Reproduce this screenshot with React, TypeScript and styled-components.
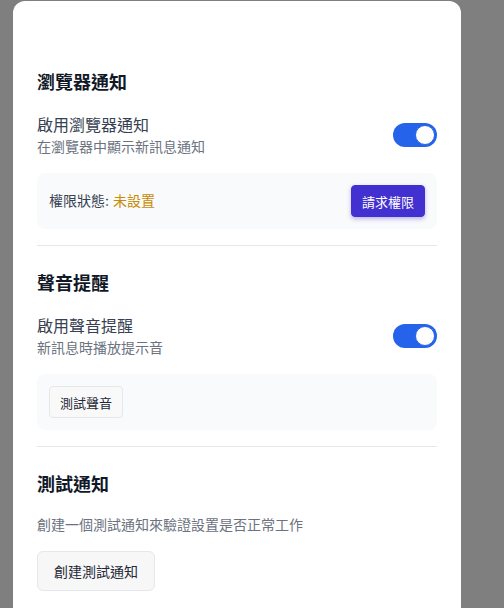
import React, { FC, useState } from 'react';
import styled, { createGlobalStyle } from 'styled-components';

const GlobalStyle = createGlobalStyle`
  html, body {
    margin: 0;
    padding: 0;
    background-color: #7f7f7f;
  }
  body {
    font-family: Inter, "Noto Sans CJK TC", "Noto Sans", sans-serif;
    -webkit-font-smoothing: antialiased;
  }
`;

const Backdrop = styled.div`
  height: 608px;
  overflow: hidden;
  padding: 1px 0 0 13px;
  box-sizing: border-box;
  background-color: #7f7f7f;
`;

const Panel = styled.div`
  width: 448px;
  min-height: 700px;
  box-sizing: border-box;
  padding: 68px 24px 24px;
  background-color: #ffffff;
  border-radius: 12px 12px 0 0;
`;

const Section = styled.section<{ $last?: boolean }>`
  padding-top: 24px;
  padding-bottom: ${({ $last }) => ($last ? '0' : '16px')};
  border-bottom: ${({ $last }) => ($last ? 'none' : '1px solid #e5e7eb')};

  &:first-child {
    padding-top: 0;
  }
`;

const SectionTitle = styled.h3`
  margin: 0 0 16px;
  font-size: 18px;
  line-height: 28px;
  font-weight: 700;
  color: #111827;
`;

const SettingRow = styled.div`
  display: flex;
  align-items: center;
  justify-content: space-between;
`;

const Label = styled.div`
  font-size: 16px;
  line-height: 24px;
  color: #374151;
`;

const Hint = styled.div`
  font-size: 14px;
  line-height: 20px;
  color: #6b7280;
`;

const Description = styled.p`
  margin: 0 0 16px;
  font-size: 14px;
  line-height: 20px;
  color: #6b7280;
`;

const Toggle = styled.button<{ $on: boolean }>`
  position: relative;
  width: 44px;
  height: 24px;
  padding: 0;
  border: none;
  border-radius: 12px;
  background-color: ${({ $on }) => ($on ? '#2563eb' : '#d1d5db')};
  cursor: pointer;

  &::after {
    content: '';
    position: absolute;
    top: 2px;
    left: ${({ $on }) => ($on ? '22px' : '2px')};
    width: 18px;
    height: 18px;
    border-radius: 50%;
    background-color: #ffffff;
    border: 1px solid ${({ $on }) => ($on ? '#2563eb' : '#d1d5db')};
  }
`;

const InfoBox = styled.div`
  display: flex;
  align-items: center;
  justify-content: space-between;
  margin-top: 16px;
  padding: 12px;
  background-color: #f9fafb;
  border-radius: 8px;
`;

const StatusText = styled.span`
  font-size: 14px;
  line-height: 20px;
  color: #374151;
`;

const StatusValue = styled.span`
  color: #ca8a04;
`;

const SmallButton = styled.button<{ $primary?: boolean }>`
  height: 32px;
  padding: 0 10px;
  font-family: inherit;
  font-size: 13px;
  border-radius: 4px;
  cursor: pointer;
  color: ${({ $primary }) => ($primary ? '#ffffff' : '#1f2937')};
  background-color: ${({ $primary }) => ($primary ? '#4330d0' : '#f9f9f9')};
  border: 1px solid ${({ $primary }) => ($primary ? '#4330d0' : '#e5e7eb')};
  box-shadow: ${({ $primary }) =>
    $primary ? '0 2px 4px rgba(67, 48, 208, 0.35)' : 'none'};
`;

const LargeButton = styled.button`
  height: 40px;
  padding: 0 16px;
  font-family: inherit;
  font-size: 14px;
  color: #1f2937;
  background-color: #f7f7f7;
  border: 1px solid #e5e7eb;
  border-radius: 6px;
  cursor: pointer;
`;

const App: FC = () => {
  const [browserOn, setBrowserOn] = useState(true);
  const [soundOn, setSoundOn] = useState(true);

  return (
    <>
      <GlobalStyle />
      <Backdrop>
        <Panel>
          <Section>
            <SectionTitle>瀏覽器通知</SectionTitle>
            <SettingRow>
              <div>
                <Label>啟用瀏覽器通知</Label>
                <Hint>在瀏覽器中顯示新訊息通知</Hint>
              </div>
              <Toggle $on={browserOn} onClick={() => setBrowserOn(!browserOn)} />
            </SettingRow>
            <InfoBox>
              <StatusText>
                權限狀態: <StatusValue>未設置</StatusValue>
              </StatusText>
              <SmallButton $primary>請求權限</SmallButton>
            </InfoBox>
          </Section>

          <Section>
            <SectionTitle>聲音提醒</SectionTitle>
            <SettingRow>
              <div>
                <Label>啟用聲音提醒</Label>
                <Hint>新訊息時播放提示音</Hint>
              </div>
              <Toggle $on={soundOn} onClick={() => setSoundOn(!soundOn)} />
            </SettingRow>
            <InfoBox>
              <SmallButton>測試聲音</SmallButton>
            </InfoBox>
          </Section>

          <Section $last>
            <SectionTitle>測試通知</SectionTitle>
            <Description>創建一個測試通知來驗證設置是否正常工作</Description>
            <LargeButton>創建測試通知</LargeButton>
          </Section>
        </Panel>
      </Backdrop>
    </>
  );
};

export default App;
